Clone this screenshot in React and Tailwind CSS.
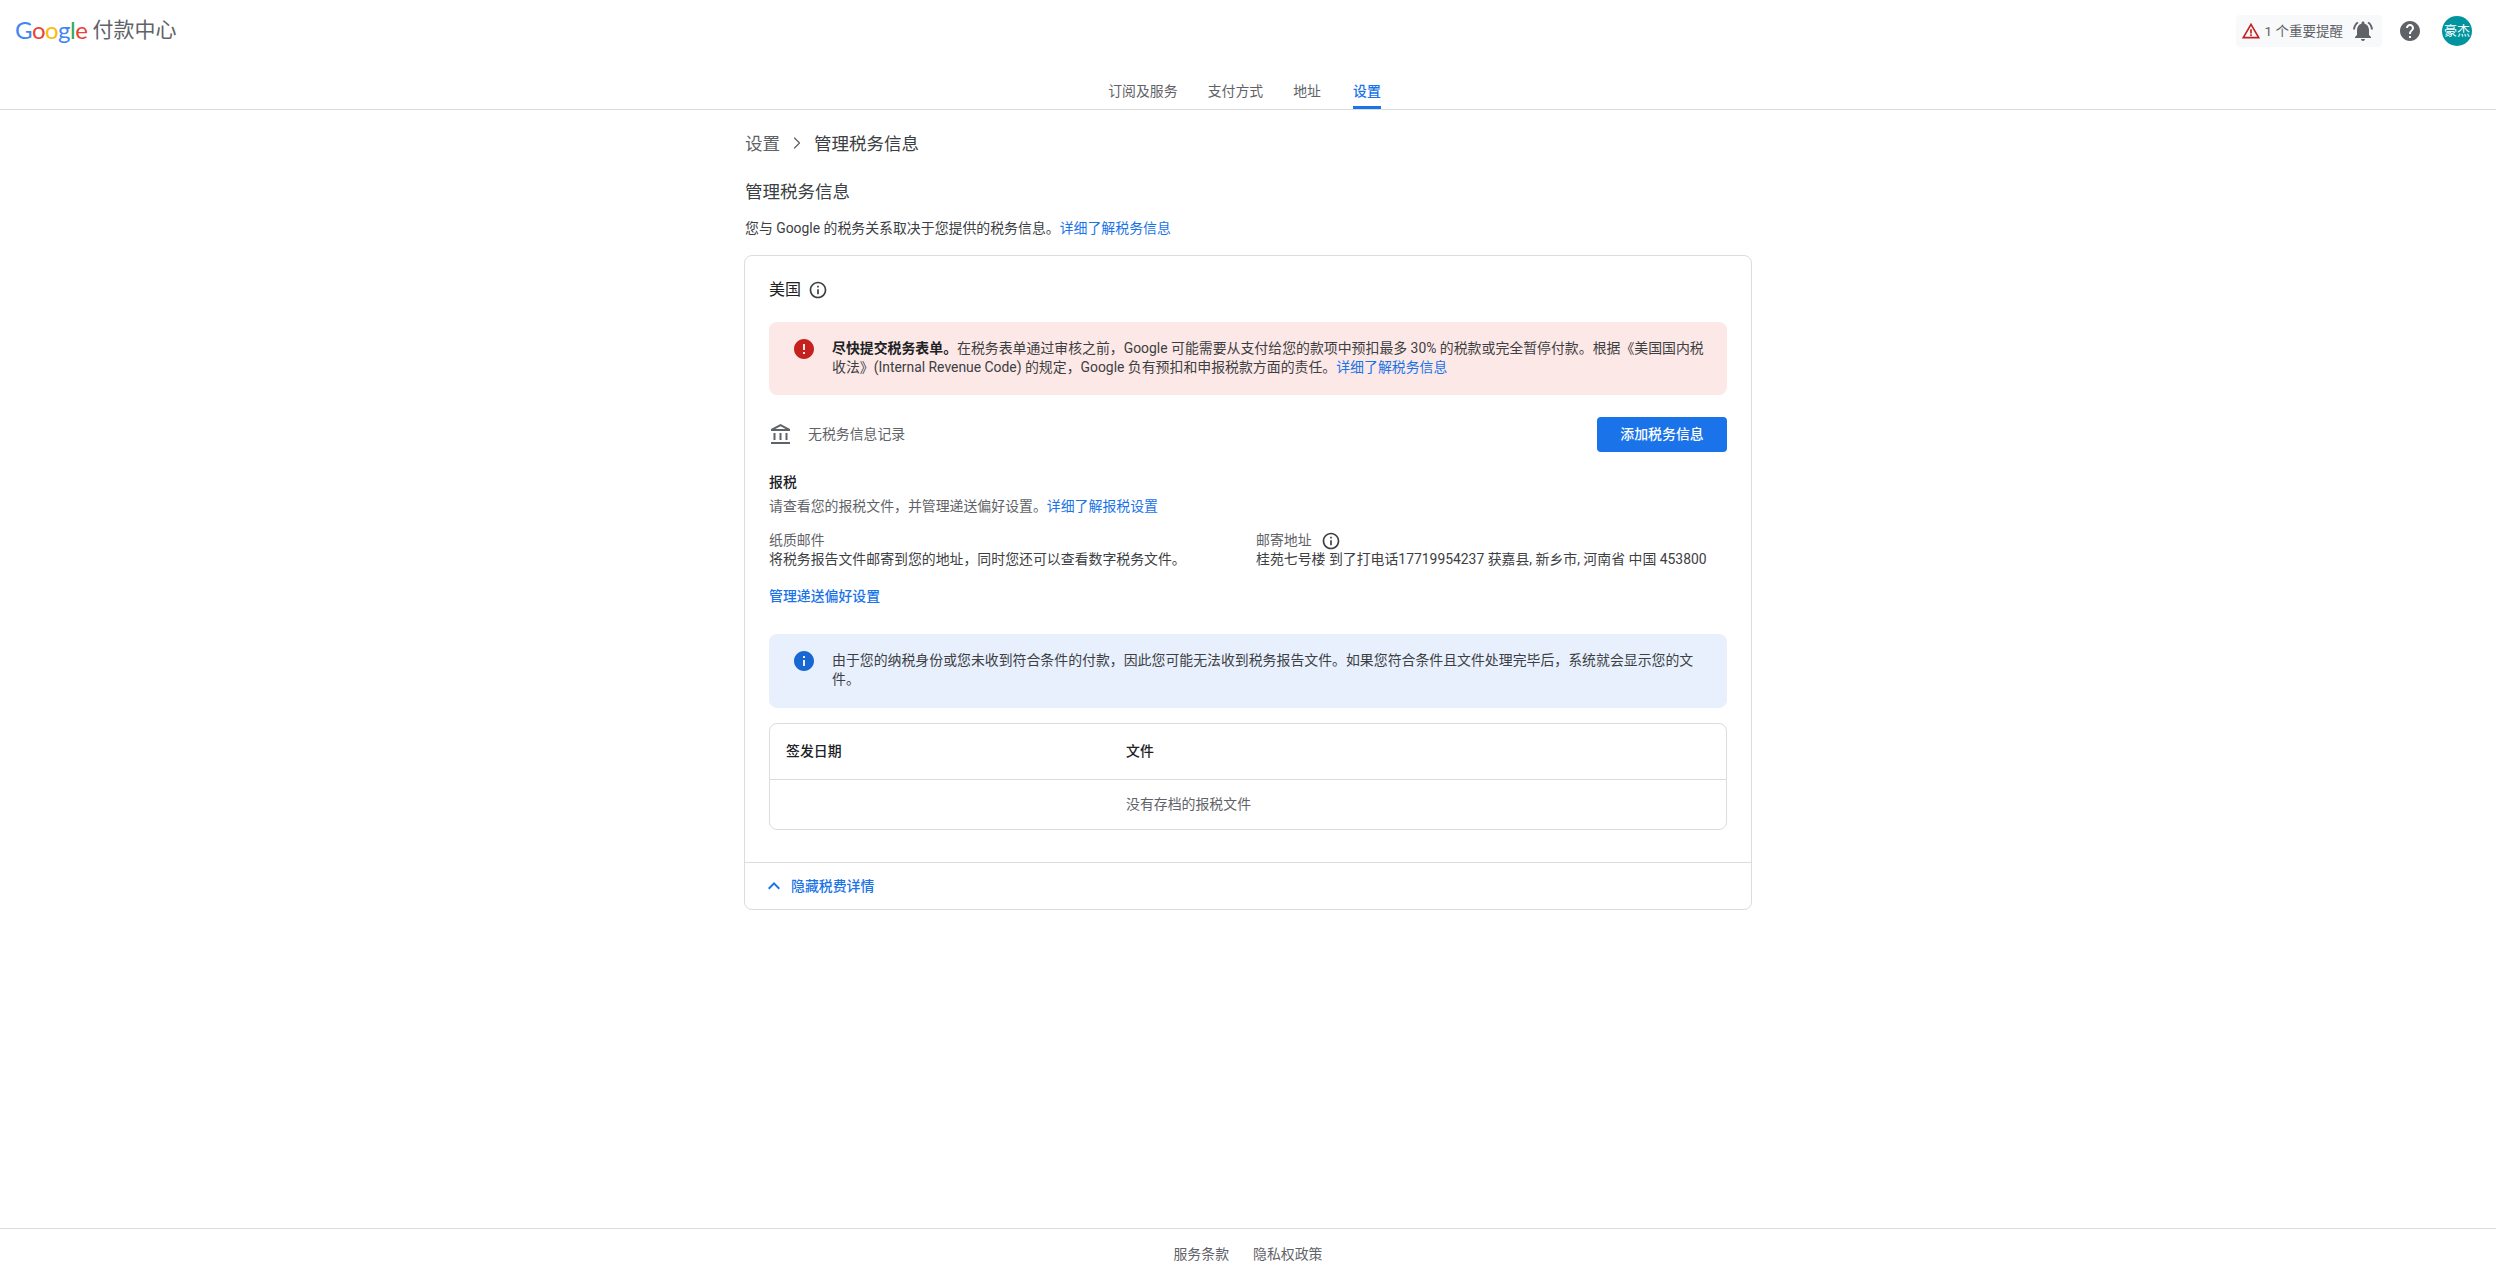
import React from "react";
import {
  MdNotificationsActive,
  MdHelp,
  MdOutlineAccountBalance,
  MdInfoOutline,
  MdError,
  MdInfo,
  MdKeyboardArrowUp,
  MdWarningAmber,
} from "react-icons/md";
import { ChevronRight } from "lucide-react";

const Link = ({ children }) => <a className="text-[#1a73e8]">{children}</a>;

function Banner({ box, icon, children }) {
  return (
    <div className={`flex rounded-lg pl-[25px] pt-[17px] ${box}`}>
      <div className="w-[38px] shrink-0">{icon}</div>
      <div className="text-[#3c4043] leading-[19px]">{children}</div>
    </div>
  );
}

export default function App() {
  return (
    <div
      className="flex min-h-[1280px] flex-col bg-white text-[13.9px] text-[#3c4043]"
      style={{ fontFamily: 'Roboto, "Noto Sans CJK SC", sans-serif' }}
    >
      <header className="h-[110px] border-b border-[#dadce0]">
        <div className="flex h-[62px] items-center pl-[15px] pr-6">
          <div className="-mt-[2px] flex items-center">
            <span className="text-[24px] leading-none tracking-[-0.5px]" style={{ fontFamily: 'Lato, sans-serif' }}>
              <span className="text-[#4285f4]">G</span>
              <span className="text-[#ea4335]">o</span>
              <span className="text-[#fbbc05]">o</span>
              <span className="text-[#4285f4]">g</span>
              <span className="text-[#34a853]">l</span>
              <span className="text-[#ea4335]">e</span>
            </span>
            <span className="ml-[5px] text-[21px] leading-none text-[#5f6368]">付款中心</span>
          </div>
          <div className="ml-auto flex items-center">
            <div className="flex h-8 items-center rounded bg-[#f8f9fa] pl-[5px] pr-[7px]">
              <MdWarningAmber className="text-[20px] text-[#c5221f]" />
              <span className="ml-[4px] text-[13.5px] text-[#5f6368]">1 个重要提醒</span>
              <MdNotificationsActive className="ml-2 text-[24px] text-[#5f6368]" />
            </div>
            <MdHelp className="ml-4 text-[24px] text-[#5f6368]" />
            <div className="ml-[20px] flex h-[30px] w-[30px] items-center justify-center rounded-full bg-[#00949e] text-[13px] text-white">
              豪杰
            </div>
          </div>
        </div>
        <nav className="flex h-[47px] justify-center gap-[30px] pr-[7px] text-[#5f6368]">
          <span className="flex items-center pt-[11px]">订阅及服务</span>
          <span className="flex items-center pt-[11px]">支付方式</span>
          <span className="flex items-center pt-[11px]">地址</span>
          <span className="ml-[2px] flex items-center border-b-[3px] border-[#1a73e8] pt-[14px] font-medium text-[#1a73e8]">设置</span>
        </nav>
      </header>

      <main className="mx-auto w-[1008px]">
        <div className="flex h-[68px] items-center pl-[1px] text-[17.5px]">
          <span className="text-[#5f6368]">设置</span>
          <ChevronRight size={20} strokeWidth={1.5} className="mx-[7px] -mt-[3px] text-[#5f6368]" />
          <span className="text-[#3c4043]">管理税务信息</span>
        </div>
        <h1 className="mt-[1px] pl-[1px] text-[17.5px] leading-[26px] font-normal text-[#3c4043]">管理税务信息</h1>
        <p className="mt-[13px] pl-[1px] leading-5">
          您与 Google 的税务关系取决于您提供的税务信息。<Link>详细了解税务信息</Link>
        </p>

        <section className="mt-[17px] rounded-lg border border-[#dadce0]">
          <div className="px-6">
            <div className="flex h-[66px] items-center pt-[2px] text-[#202124]">
              <span className="text-[16px]">美国</span>
              <MdInfoOutline className="ml-[7px] text-[20px] text-[#3c4043]" />
            </div>

            <Banner
              box="h-[73px] bg-[#fce8e6] pr-[20px]"
              icon={<MdError className="-mt-[2px] -ml-[2px] text-[24px] text-[#c5221f]" />}
            >
              <b className="font-bold text-[#202124]">尽快提交税务表单。</b>
              在税务表单通过审核之前，Google 可能需要从支付给您的款项中预扣最多 30% 的税款或完全暂停付款。根据《美国国内税收法》(Internal Revenue Code) 的规定，Google 负有预扣和申报税款方面的责任。<Link>详细了解税务信息</Link>
            </Banner>

            <div className="mt-[22px] flex h-[35px] items-center">
              <MdOutlineAccountBalance className="text-[24px] text-[#5f6368]" />
              <span className="ml-[15px] text-[#5f6368]">无税务信息记录</span>
              <button className="ml-auto h-[35px] w-[130px] rounded bg-[#1a73e8] font-medium text-white">添加税务信息</button>
            </div>

            <h2 className="mt-5 leading-5 font-medium text-[#202124]">报税</h2>
            <p className="mt-1 leading-5 text-[#5f6368]">
              请查看您的报税文件，并管理递送偏好设置。<Link>详细了解报税设置</Link>
            </p>

            <div className="mt-[15px] grid grid-cols-2 gap-x-4 leading-[19px]">
              <div>
                <div className="text-[#5f6368]">纸质邮件</div>
                <div>将税务报告文件邮寄到您的地址，同时您还可以查看数字税务文件。</div>
              </div>
              <div>
                <div className="flex h-[19px] items-center text-[#5f6368]">
                  邮寄地址
                  <MdInfoOutline className="ml-[9px] text-[20px] text-[#3c4043]" />
                </div>
                <div>桂苑七号楼 到了打电话17719954237 获嘉县, 新乡市, 河南省 中国 453800</div>
              </div>
            </div>

            <a className="mt-[17px] block leading-5 font-medium text-[#1a73e8]">管理递送偏好设置</a>

            <div className="mt-[28px]">
              <Banner
                box="h-[74px] bg-[#e8f0fe] pr-6"
                icon={<MdInfo className="-mt-[2px] -ml-[2px] text-[24px] text-[#1967d2]" />}
              >
                由于您的纳税身份或您未收到符合条件的付款，因此您可能无法收到税务报告文件。如果您符合条件且文件处理完毕后，系统就会显示您的文件。
              </Banner>
            </div>

            <div className="mt-[15px] rounded-lg border border-[#dadce0]">
              <div className="flex h-[56px] items-center border-b border-[#dadce0] font-medium text-[#202124]">
                <div className="w-[340px] px-4">签发日期</div>
                <div className="px-4">文件</div>
              </div>
              <div className="flex h-[49px] items-center text-[#5f6368]">
                <div className="w-[340px] px-4"></div>
                <div className="px-4">没有存档的报税文件</div>
              </div>
            </div>
          </div>

          <div className="mt-[32px] flex h-[47px] items-center border-t border-[#dadce0] pl-[17px] font-medium text-[#1a73e8]">
            <MdKeyboardArrowUp className="text-[24px]" />
            <span className="ml-[5px]">隐藏税费详情</span>
          </div>
        </section>
      </main>

      <footer className="mt-auto flex h-[52px] items-center justify-center gap-6 border-t border-[#dadce0] text-[#5f6368]">
        <span>服务条款</span>
        <span>隐私权政策</span>
      </footer>
    </div>
  );
}
